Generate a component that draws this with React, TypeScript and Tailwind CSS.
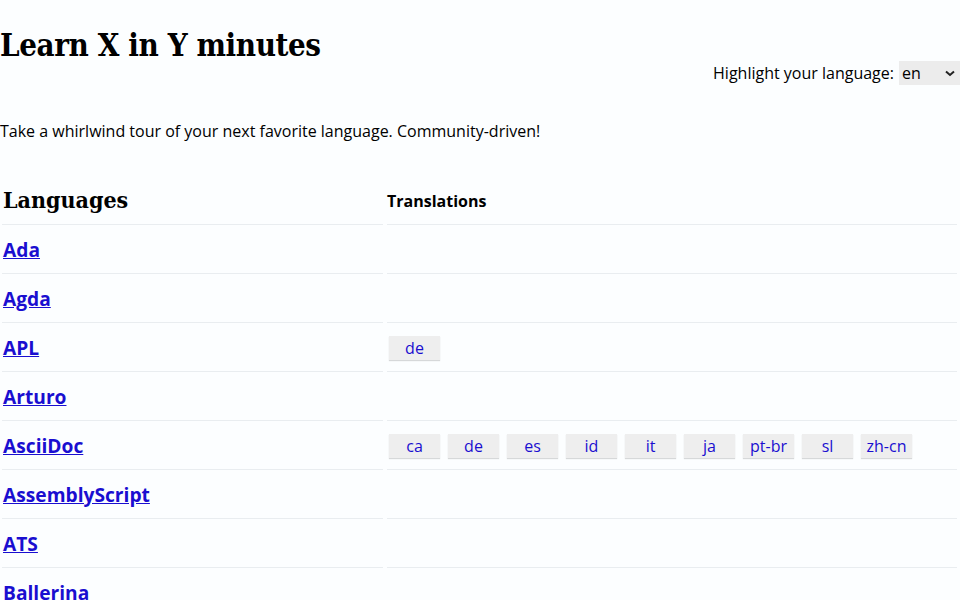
import React from "react";

const langs: { name: string; tr: string[] }[] = [
  { name: "Ada", tr: [] },
  { name: "Agda", tr: [] },
  { name: "APL", tr: ["de"] },
  { name: "Arturo", tr: [] },
  { name: "AsciiDoc", tr: ["ca", "de", "es", "id", "it", "ja", "pt-br", "sl", "zh-cn"] },
  { name: "AssemblyScript", tr: [] },
  { name: "ATS", tr: [] },
  { name: "Ballerina", tr: [] },
];

const slab: React.CSSProperties = {
  fontFamily: '"Roboto Slab", "DejaVu Serif Condensed", "DejaVu Serif", serif',
  fontStretch: "condensed",
};

export default function App() {
  return (
    <div
      className="min-h-[600px] w-[960px] overflow-hidden bg-[#fcfeff] text-black"
      style={{ fontFamily: '"Open Sans", "Noto Sans", sans-serif' }}
    >
      <h1 className="pt-[24px] text-[31px] font-bold leading-[42px] tracking-[-0.4px]" style={slab}>
        Learn X in Y minutes
      </h1>
      <div className="mt-[-5px] flex items-center justify-end gap-[5px] text-[16px]">
        <span>Highlight your language:</span>
        <div className="flex h-[24px] w-[61px] items-center justify-between bg-[#ececec] pl-[3px] pr-[5px]">
          <span>en</span>
          <svg width="10" height="7" viewBox="0 0 10 7">
            <path d="M1 1.5 L5 5 L9 1.5" fill="none" stroke="#222" strokeWidth="2" />
          </svg>
        </div>
      </div>
      <p className="mt-[35px] text-[16px] leading-[22px]">
        Take a whirlwind tour of your next favorite language. Community-driven!
      </p>
      <div className="mt-[34px] flex flex-col">
        <div className="flex gap-[4px] pl-[2px]">
          <div className="flex h-[49px] w-[381px] items-center border-b border-[#e9edf0] pl-[1px] pb-[0px] text-[23px] font-bold" style={slab}>
            Languages
          </div>
          <div className="flex h-[49px] w-[570px] items-center border-b border-[#e9edf0] pt-[2px] text-[16px] font-bold">
            Translations
          </div>
        </div>
        {langs.map((l) => (
          <div key={l.name} className="flex gap-[4px] pl-[2px]">
            <div className="flex h-[49px] w-[381px] items-center border-b border-[#e9edf0] pl-[1px] pt-[2px]">
              <a href="#" className="text-[19.2px] font-bold text-[#1a0ed0] underline">
                {l.name}
              </a>
            </div>
            <div className="flex h-[49px] w-[570px] items-center gap-[8px] border-b border-[#e9edf0] pl-[2px] pt-[2px]">
              {l.tr.map((t) => (
                <a
                  key={t}
                  href="#"
                  className="flex h-[24px] w-[51px] items-center justify-center bg-[#eeeeee] text-[16px] text-[#1a0ed0] shadow-[0_1px_1px_rgba(0,0,0,0.15)]"
                >
                  {t}
                </a>
              ))}
            </div>
          </div>
        ))}
      </div>
    </div>
  );
}
